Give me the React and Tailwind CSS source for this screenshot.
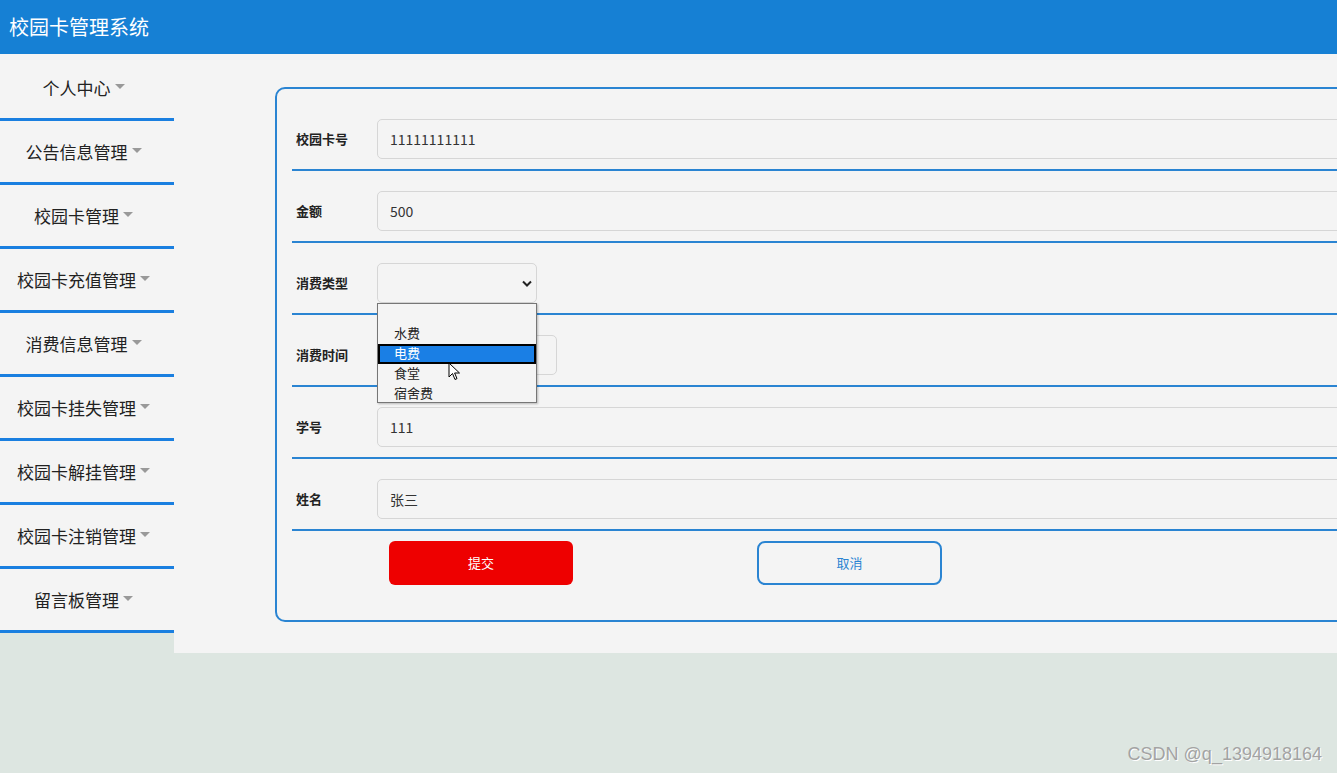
import React from "react";

const menus = [
  "个人中心",
  "公告信息管理",
  "校园卡管理",
  "校园卡充值管理",
  "消费信息管理",
  "校园卡挂失管理",
  "校园卡解挂管理",
  "校园卡注销管理",
  "留言板管理",
];

const options = ["", "水费", "电费", "食堂", "宿舍费"];

const Caret = () => (
  <span className="ml-[4px] inline-block w-0 h-0 border-l-[5px] border-r-[5px] border-t-[5px] border-l-transparent border-r-transparent border-t-[#999] relative top-[-1px]" />
);

const Row = ({ label, children }) => (
  <div className="flex items-start pt-[20px] pb-[10px] border-b-2 border-[#2a84d2]">
    <div className="w-[85px] pl-[4px] h-[40px] flex items-center text-[13px] font-bold text-[#222]">
      {label}
    </div>
    {children}
  </div>
);

const inputCls =
  "h-[40px] rounded-[5px] border border-[#d6d6d6] bg-[#f4f4f4] pl-[12px] flex items-center text-[14px] text-[#333]";

const App = () => {
  return (
    <div
      className="min-h-[773px] bg-[#dde6e1] overflow-hidden"
      style={{ fontFamily: '"Noto Sans CJK SC", "Noto Sans", sans-serif' }}
    >
      <div className="h-[54px] bg-[#1680d4] flex items-center pl-[9px] text-white text-[20px]">
        校园卡管理系统
      </div>
      <div className="flex items-start">
        <div className="w-[174px] shrink-0 bg-[#f4f4f4] pt-[3px]">
          {menus.map((m) => (
            <div
              key={m}
              className="h-[64px] border-b-[3px] border-[#1a7fe0] flex items-center justify-center pr-[7px] text-[17px] text-[#222]"
            >
              {m}
              <Caret />
            </div>
          ))}
        </div>
        <div className="flex-1 h-[599px] bg-[#f4f4f4] overflow-hidden pl-[101px] pt-[33px]">
          <div className="relative w-[1200px] h-[535px] border-2 border-[#2a84d2] rounded-[10px] pl-[15px] pt-[10px]">
            <Row label="校园卡号">
              <div className={`${inputCls} flex-1`}>11111111111</div>
            </Row>
            <Row label="金额">
              <div className={`${inputCls} flex-1`}>500</div>
            </Row>
            <Row label="消费类型">
              <div className="h-[40px] w-[160px] rounded-[5px] border border-[#d6d6d6] bg-[#f4f4f4] flex items-center justify-end pr-[4px]">
                <svg width="10" height="7" viewBox="0 0 10 7">
                  <path d="M1 1.5 L5 5.5 L9 1.5" fill="none" stroke="#222" strokeWidth="2" />
                </svg>
              </div>
            </Row>
            <Row label="消费时间">
              <div className={`${inputCls} w-[180px]`} />
            </Row>
            <Row label="学号">
              <div className={`${inputCls} flex-1`}>111</div>
            </Row>
            <Row label="姓名">
              <div className={`${inputCls} flex-1`}>张三</div>
            </Row>
            <div className="flex pt-[10px] pl-[97px] gap-[184px]">
              <button className="w-[184px] h-[44px] rounded-[6px] bg-[#ee0000] text-white text-[13px]">
                提交
              </button>
              <button className="w-[185px] h-[44px] rounded-[8px] border-2 border-[#2a84d2] text-[#2a84d2] text-[13px]">
                取消
              </button>
            </div>

            <div className="absolute left-[100px] top-[214px] w-[160px] h-[100px] border border-[#767676] bg-[#f4f4f4] shadow-[1px_1px_2px_rgba(0,0,0,0.25)]">
              {options.map((o, i) => (
                <div
                  key={i}
                  className={
                    i === 2
                      ? "h-[20px] flex items-center pl-[14px] pb-[3px] text-[13px] text-white bg-[#1a7fe5] border-2 border-black"
                      : "h-[20px] flex items-center pl-[16px] pb-[3px] text-[13px] text-[#222]"
                  }
                >
                  {o}
                </div>
              ))}
            </div>
            <svg
              className="absolute left-[171px] top-[273px]"
              width="13"
              height="20"
              viewBox="0 0 13 20"
            >
              <path
                d="M1 1 L1 15 L4.5 11.5 L7 17.5 L9 16.6 L6.6 11 L11.5 11 Z"
                fill="#fff"
                stroke="#000"
                strokeWidth="1"
                strokeLinejoin="round"
              />
            </svg>
          </div>
        </div>
      </div>
      <div className="flex justify-end pr-[15px] pt-[88px]">
        <span
          className="text-[18px] text-[#a3a3a3] [text-shadow:1px_1px_0_#fff]"
          style={{ fontFamily: '"Liberation Sans", Arial, sans-serif' }}
        >
          CSDN @q_1394918164
        </span>
      </div>
    </div>
  );
};

export default App;
